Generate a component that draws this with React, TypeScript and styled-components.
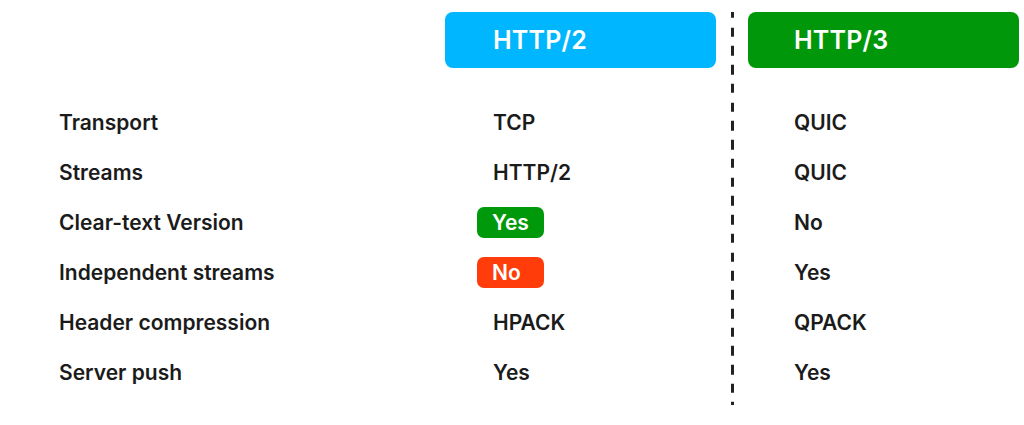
import React from "react";
import styled, { createGlobalStyle } from "styled-components";

const Global = createGlobalStyle`
  html, body { margin: 0; padding: 0; background: #ffffff; }
  body { font-family: Inter, "Noto Sans", "Liberation Sans", sans-serif; color: #1b1b1b; }
`;

const Table = styled.div`
  display: grid;
  grid-template-columns: 386px 271px 32px 271px;
  grid-template-rows: 85px repeat(6, 50px) 8px;
  padding: 12px 0 0 59px;
  width: 1024px;
  height: 425px;
  box-sizing: border-box;
`;

const HeaderBox = styled.div<{ $bg: string; $pad: number; $col: number }>`
  grid-row: 1;
  grid-column: ${(p) => p.$col};
  align-self: start;
  height: 56px;
  border-radius: 8px;
  background: ${(p) => p.$bg};
  color: #ffffff;
  font-size: 25px;
  font-weight: 600;
  display: flex;
  align-items: center;
  padding-left: ${(p) => p.$pad}px;
  letter-spacing: 0.2px;
`;

const Divider = styled.div`
  grid-column: 3;
  grid-row: 1 / -1;
  justify-self: center;
  width: 3px;
  background-image: repeating-linear-gradient(
    to bottom,
    #222222 0px,
    #222222 9.5px,
    transparent 9.5px,
    transparent 18.75px
  );
  background-position: 0 -3.25px;
`;

const Label = styled.div`
  grid-column: 1;
  display: flex;
  align-items: center;
  font-size: 21px;
  font-weight: 600;
  color: #1b1b1b;
`;

const Value = styled.div<{ $col: number; $pad: number }>`
  grid-column: ${(p) => p.$col};
  display: flex;
  align-items: center;
  padding-left: ${(p) => p.$pad}px;
  font-size: 21px;
  font-weight: 600;
  color: #1b1b1b;
`;

const Badge = styled.span<{ $bg: string }>`
  display: inline-flex;
  align-items: center;
  box-sizing: border-box;
  width: 67px;
  height: 31px;
  margin-left: -16px;
  padding-left: 15px;
  border-radius: 7px;
  background: ${(p) => p.$bg};
  color: #ffffff;
  font-size: 21px;
  font-weight: 600;
`;

type Cell = string | { badge: string; color: string };

const rows: { label: string; h2: Cell; h3: Cell }[] = [
  { label: "Transport", h2: "TCP", h3: "QUIC" },
  { label: "Streams", h2: "HTTP/2", h3: "QUIC" },
  { label: "Clear-text Version", h2: { badge: "Yes", color: "#00990b" }, h3: "No" },
  { label: "Independent streams", h2: { badge: "No", color: "#ff3c0a" }, h3: "Yes" },
  { label: "Header compression", h2: "HPACK", h3: "QPACK" },
  { label: "Server push", h2: "Yes", h3: "Yes" },
];

const renderCell = (c: Cell) =>
  typeof c === "string" ? c : <Badge $bg={c.color}>{c.badge}</Badge>;

export default function App() {
  return (
    <>
      <Global />
      <Table>
        <HeaderBox $col={2} $bg="#00b6ff" $pad={48}>HTTP/2</HeaderBox>
        <Divider />
        <HeaderBox $col={4} $bg="#00970b" $pad={46}>HTTP/3</HeaderBox>
        {rows.map((r, i) => (
          <React.Fragment key={r.label}>
            <Label style={{ gridRow: i + 2 }}>{r.label}</Label>
            <Value $col={2} $pad={48} style={{ gridRow: i + 2 }}>
              {renderCell(r.h2)}
            </Value>
            <Value $col={4} $pad={46} style={{ gridRow: i + 2 }}>
              {renderCell(r.h3)}
            </Value>
          </React.Fragment>
        ))}
      </Table>
    </>
  );
}
